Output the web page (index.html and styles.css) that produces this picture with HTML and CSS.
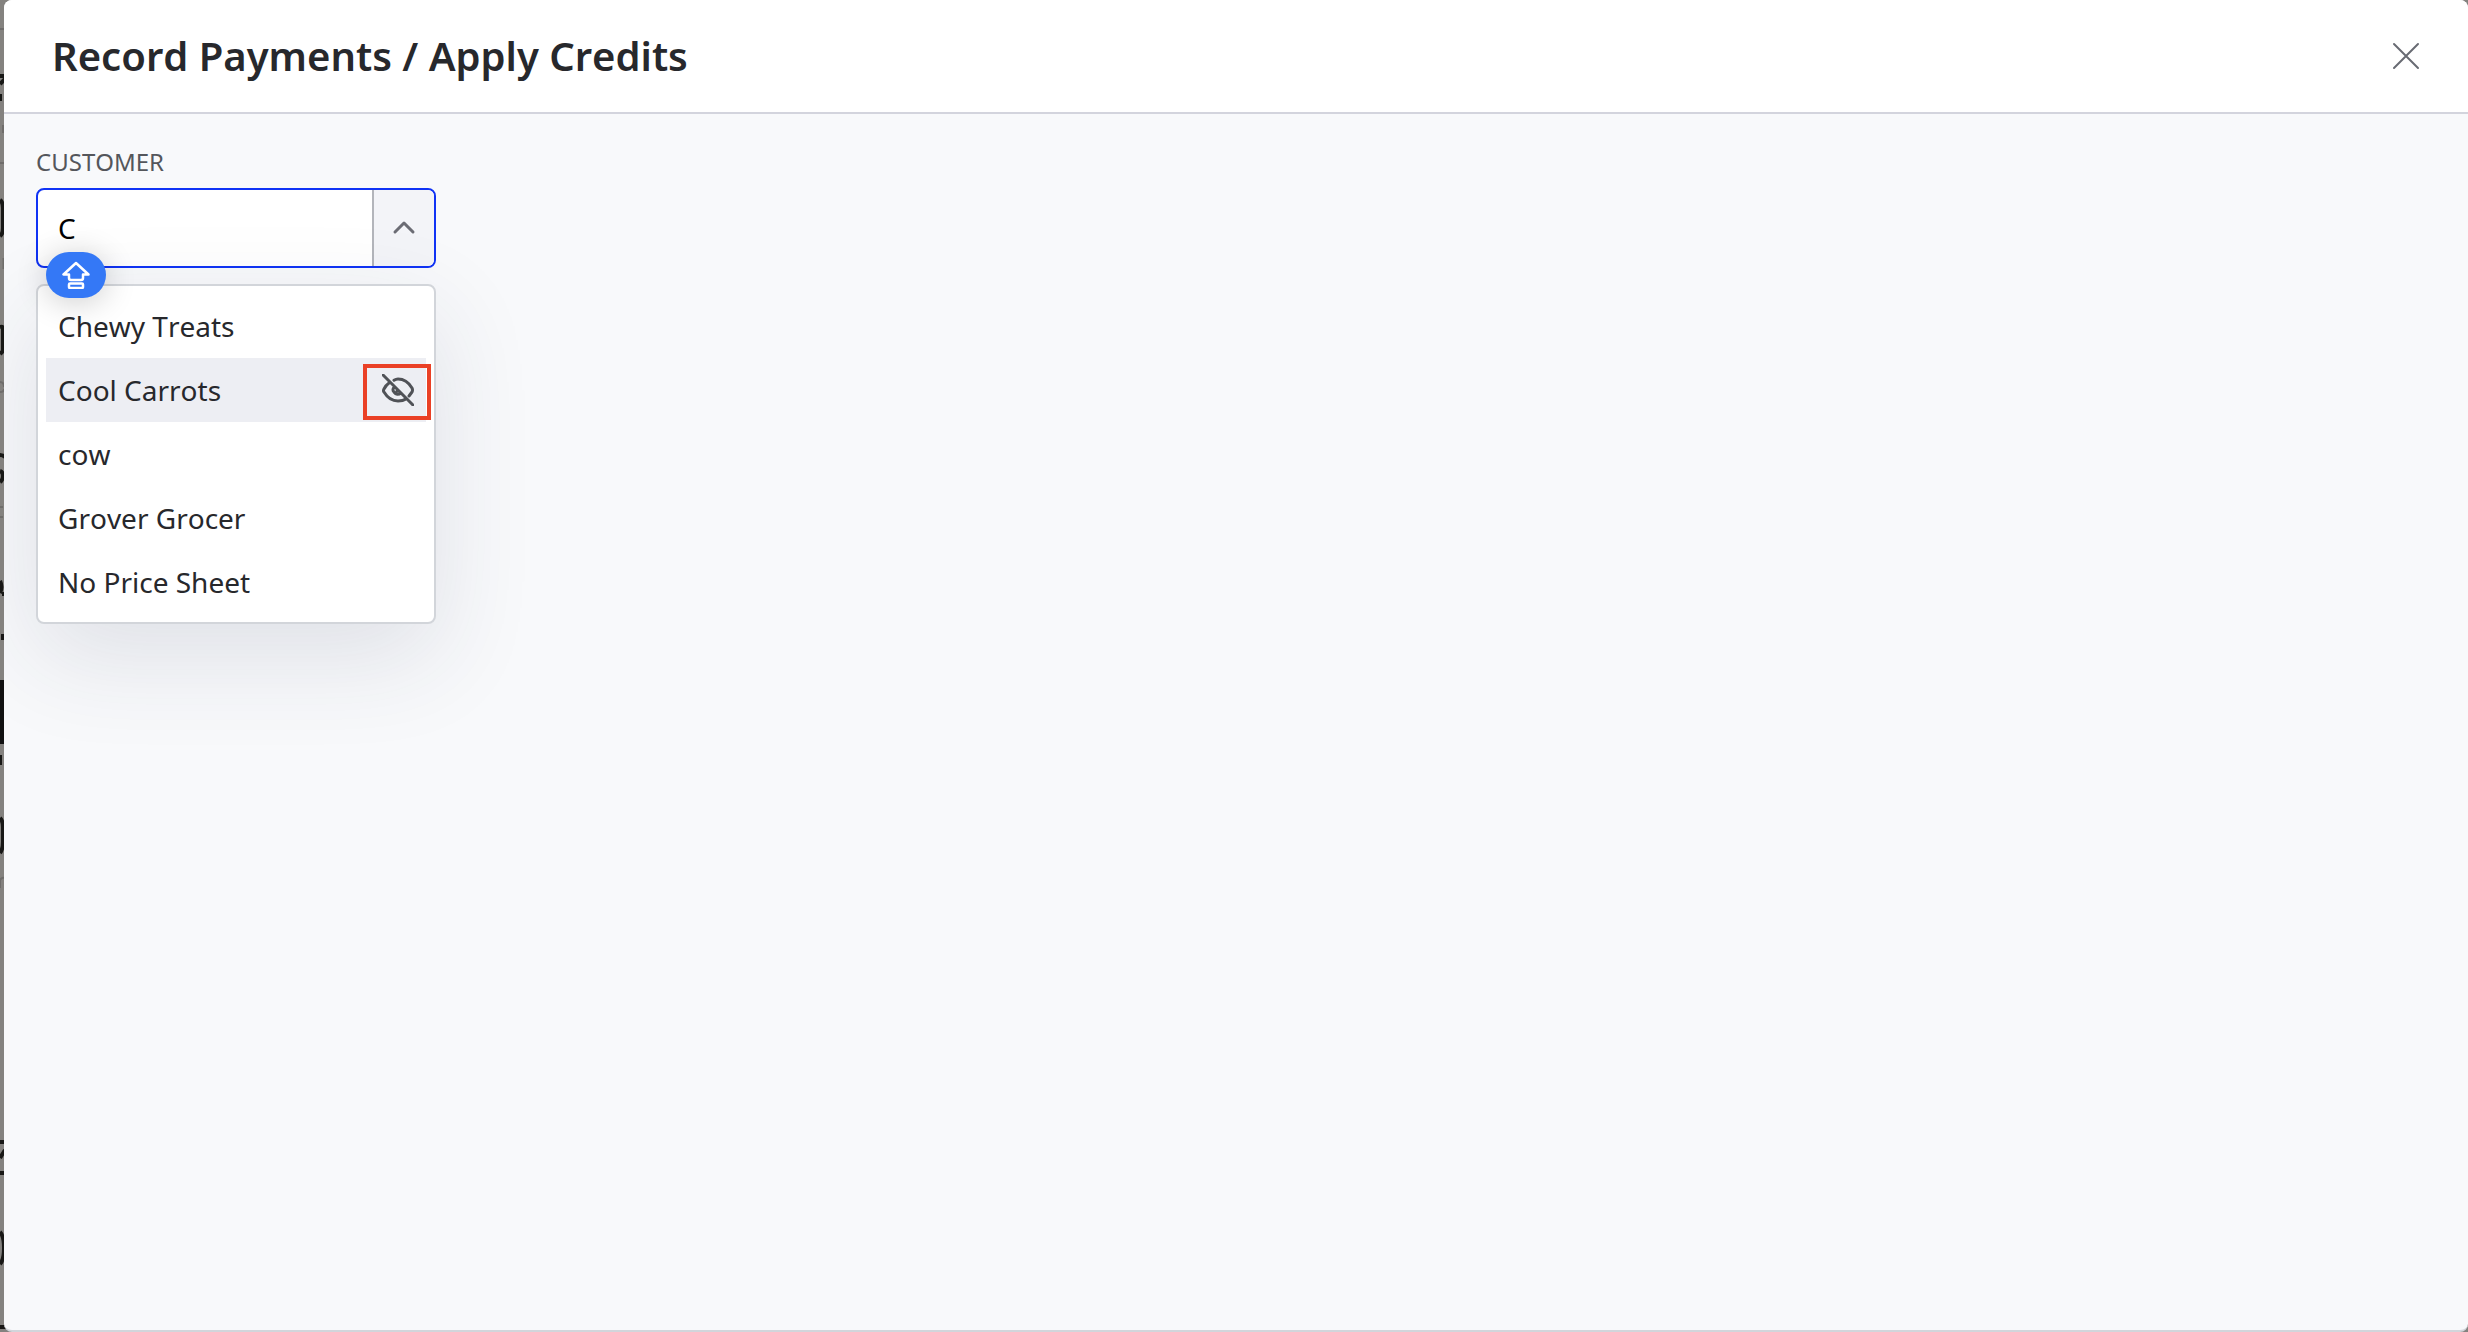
FILE: index.html
```html
<!DOCTYPE html>
<html lang="en">
<head>
    <meta charset="UTF-8">
    <meta name="viewport" content="width=device-width, initial-scale=1.0">
    <title>Record Payments / Apply Credits</title>
    <link rel="stylesheet" href="styles.css">
</head>
<body>
    <!-- dimmed page behind the dialog -->
    <svg class="page-edge" width="12" height="1332" viewBox="0 0 12 1332" aria-hidden="true">
        <g fill="none" stroke="#6f6d6b" stroke-width="2">
            <path d="M0 29h12M0 163h12M3 125v8M3.500 258v11M0 382q4 0 4 5M0 392q4 0 4-3M0 507h3M0 517h3M0 878v10M0 880q2-3 4-2"/>
        </g>
        <g fill="none" stroke="#181816" stroke-width="4">
            <path d="M0 76h4M0 84l5-5M0 94v7M0 200q3 2 3 8v20q0 6-3 8M0 327q4-1 4 4M3 328v22M0 354l4-4M0 455q3 0 5 2M0 471q3 1 3 5t-3 6M0 581q3 6 0 12M2 594h3M3 634v6M0 755v10M0 818q3 3 3 9v15q0 7-3 11M0 1142h5M0 1158l5-8M0 1173h5M0 1232q4 4 4 16t-4 16M0 1327h6"/>
        </g>
        <rect y="680" width="12" height="64" fill="#111"/>
    </svg>

    <div class="dialog" role="dialog" aria-labelledby="dialog-title">
        <header class="dialog-header">
            <h1 id="dialog-title">Record Payments / Apply Credits</h1>
            <button type="button" class="close" aria-label="Close">
                <svg width="28" height="28" viewBox="0 0 28 28"><path d="M2 2l24 24M26 2L2 26"/></svg>
            </button>
        </header>

        <main class="dialog-body">
            <div class="field">
                <label for="customer">CUSTOMER</label>
                <div class="combobox">
                    <input type="text" id="customer" value="C" autocomplete="off" role="combobox" aria-expanded="true" aria-controls="customer-list">
                    <button type="button" class="toggle" aria-label="Close list">
                        <svg width="24" height="24" viewBox="0 0 24 24"><path d="M3 16l9-9 9 9"/></svg>
                    </button>

                    <span class="caps-lock">
                        <svg width="28" height="28" viewBox="0 0 28 28"><path d="M14 2L1.500 13.500H7V17q0 2 2 2h10q2 0 2-2v-3.500h5.500zM8 22.500h12q1 0 1 1v2.500q0 1-1 1H8q-1 0-1-1v-2.500q0-1 1-1z"/></svg>
                    </span>

                    <ul class="options" id="customer-list" role="listbox">
                        <li role="option">Chewy Treats</li>
                        <li role="option" class="active" aria-selected="true">
                            Cool Carrots
                            <button type="button" class="hide" aria-label="Hide customer">
                                <svg width="32" height="32" viewBox="0 0 32 32"><path d="M1 1l30 30M12 6.300Q14 5 16 5c6 0 11 4 14 9q1 2 0 4l-3 4M7 9q-3 2-5 6-1 2 0 3c3 5 8 9 14 9q5 0 8-2M12 13q-2 3 0 5 3 4 7 1M15 17h2"/></svg>
                            </button>
                        </li>
                        <li role="option">cow</li>
                        <li role="option">Grover Grocer</li>
                        <li role="option">No Price Sheet</li>
                    </ul>
                </div>
            </div>
        </main>
    </div>
</body>
</html>
```

FILE: styles.css
```css
*,
*::after {
    box-sizing: border-box;
}

body {
    margin: 0;
    background-color: #84827f;
    font-family: "Noto Sans", "Open Sans", sans-serif;
    font-kerning: none;
    color: #27282c;
    overflow: hidden;
}

button {
    padding: 0;
    border: none;
    background: transparent;
    cursor: pointer;
}

svg {
    display: block;
    fill: none;
    stroke-linecap: round;
    stroke-linejoin: round;
}

.page-edge {
    position: absolute;
    top: 0;
    left: 0;
    stroke-linecap: butt;
}

.dialog {
    position: relative;
    display: flex;
    flex-direction: column;
    min-height: 100vh;
    margin-left: 4px;
    background-color: #f8f9fb;
    border-bottom: 2px solid #d2d5db;
    border-radius: 8px;
    overflow: hidden;
}

.dialog-header {
    display: flex;
    align-items: center;
    justify-content: space-between;
    height: 114px;
    padding: 0 48px;
    background-color: #fff;
    border-bottom: 2px solid #d3d4dd;
}

h1 {
    margin: 0;
    font-size: 40px;
    font-weight: 600;
    line-height: 56px;
}

.close svg {
    stroke: #686b73;
    stroke-width: 2;
}

.dialog-body {
    flex: 1;
    padding: 32px;
}

.field {
    width: 400px;
}

label {
    display: block;
    margin-bottom: 10px;
    font-size: 24px;
    line-height: 32px;
    color: #54565b;
}

.combobox {
    position: relative;
    display: flex;
    height: 80px;
    border: 2px solid #1033f5;
    border-radius: 8px;
    background-color: #fff;
}

.combobox input {
    flex: 1;
    min-width: 0;
    padding: 0 20px;
    border: none;
    outline: none;
    background: transparent;
    font-family: inherit;
    font-size: 28px;
    color: #000;
}

.toggle {
    display: flex;
    align-items: center;
    justify-content: center;
    width: 62px;
    border-left: 2px solid #b3b5bb;
    border-radius: 0 6px 6px 0;
    background-color: #f3f4f8;
}

.toggle svg {
    stroke: #6b6c74;
    stroke-width: 3;
}

/* caret badge sits over both the input and the list */
.caps-lock {
    position: absolute;
    z-index: 2;
    top: 62px;
    left: 8px;
    display: flex;
    align-items: center;
    justify-content: center;
    width: 60px;
    height: 46px;
    border-radius: 23px;
    background-color: #3478f6;
    box-shadow: 0 4px 32px rgba(0, 0, 0, 0.2);
}

.caps-lock svg {
    stroke: #fff;
    stroke-width: 2.5;
}

.options {
    position: absolute;
    z-index: 1;
    top: 94px;
    left: -2px;
    width: 400px;
    margin: 0;
    padding: 8px;
    border: 2px solid #d2d5da;
    border-radius: 8px;
    background-color: #fff;
    box-shadow: 0 32px 100px rgba(40, 48, 80, 0.12);
    list-style: none;
}

.options li {
    position: relative;
    display: flex;
    align-items: center;
    justify-content: space-between;
    height: 64px;
    padding: 0 12px;
    font-size: 28px;
    line-height: 40px;
}

.options .active {
    background-color: #edeef3;
}

.hide svg {
    stroke: #505257;
    stroke-width: 3;
}

/* highlight frame round the hide button */
.active::after {
    content: "";
    position: absolute;
    top: 6px;
    right: -5px;
    width: 68px;
    height: 56px;
    border: 4px solid #ea4025;
}
```
